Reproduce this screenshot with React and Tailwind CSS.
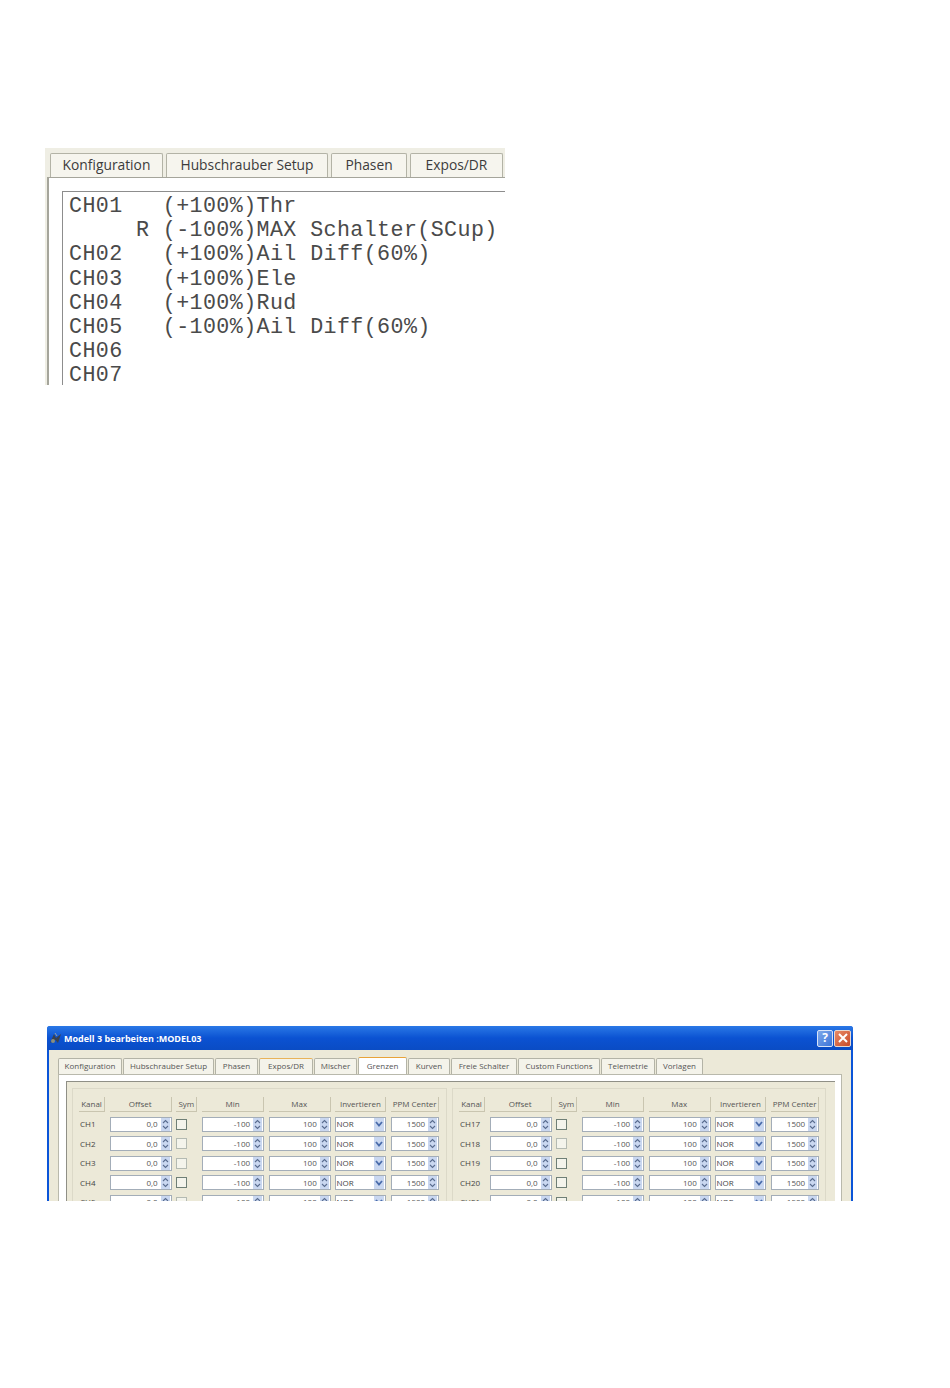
const UI = { fontFamily: '"Open Sans", "Noto Sans", sans-serif' };

function Spin() {
  return (
    <span className="flex h-full w-[9px] shrink-0 items-center justify-center bg-[#c9d7f0]">
      <svg width="7" height="11" viewBox="0 0 7 11" fill="none" stroke="#5a6d90" strokeWidth="1.1">
        <path d="M1 4 L3.5 1.5 L6 4" />
        <path d="M1 7 L3.5 9.5 L6 7" />
      </svg>
    </span>
  );
}

function SpinBox({ value }) {
  return (
    <div className="flex h-[15px] items-center border border-[#a3adb8] bg-white pr-px text-[8px] leading-none text-[#555]">
      <span className="flex-1 pr-[3px] text-right">{value}</span>
      <Spin />
    </div>
  );
}

function Select() {
  return (
    <div className="flex h-[15px] items-center justify-between border border-[#a3adb8] bg-white pr-px text-[8px] leading-none text-[#444]">
      <span>NOR</span>
      <span className="flex h-full w-[10px] items-center justify-center bg-[#c9d7f0]">
        <svg width="8" height="6" viewBox="0 0 8 6" fill="none" stroke="#4a6cab" strokeWidth="1.8">
          <path d="M1 1 L4 4.5 L7 1" />
        </svg>
      </span>
    </div>
  );
}

function Head({ children }) {
  return (
    <div className="flex h-[15px] items-center justify-center border-b border-r border-[#c9c5b0] bg-[#ece9d8] text-[8px] leading-none text-[#555]">
      {children}
    </div>
  );
}

function Group({ start, widthClass, light }) {
  const channels = [0, 1, 2, 3, 4];
  return (
    <div className={`${widthClass} border border-[#dcd9c8] px-[6px] pt-[8px]`}>
      <div className="grid grid-cols-[26px_62px_21px_62px_62px_51px_48px] gap-x-[4.7px] gap-y-[4.6px]">
        <Head>Kanal</Head>
        <Head>Offset</Head>
        <Head>Sym</Head>
        <Head>Min</Head>
        <Head>Max</Head>
        <Head>Invertieren</Head>
        <Head>PPM Center</Head>
        {channels.map((i) => (
          <div key={i} className="contents">
            <div className="flex h-[15px] items-center pl-px text-[8px] leading-none text-[#444]">CH{start + i}</div>
            <SpinBox value="0,0" />
            <div className="flex h-[15px] items-center">
              <span
                className={`h-[11px] w-[11px] border bg-[#f4f4ec] ${
                  light.includes(i) ? "border-[#b4bab2]" : "border-[#6f7f76]"
                }`}
              />
            </div>
            <SpinBox value="-100" />
            <SpinBox value="100" />
            <Select />
            <SpinBox value="1500" />
          </div>
        ))}
      </div>
    </div>
  );
}

const topTabs = [
  ["Konfiguration", "w-[113px]"],
  ["Hubschrauber Setup", "w-[162px]"],
  ["Phasen", "w-[76px]"],
  ["Expos/DR", "w-[93px]"],
];

const lines = [
  "CH01   (+100%)Thr",
  "     R (-100%)MAX Schalter(SCup)",
  "CH02   (+100%)Ail Diff(60%)",
  "CH03   (+100%)Ele",
  "CH04   (+100%)Rud",
  "CH05   (-100%)Ail Diff(60%)",
  "CH06",
  "CH07",
];

const winTabs = [
  ["Konfiguration", "w-[64px]"],
  ["Hubschrauber Setup", "w-[91px]"],
  ["Phasen", "w-[43px]"],
  ["Expos/DR", "w-[54px]", "hot"],
  ["Mischer", "w-[43px]"],
  ["Grenzen", "w-[49px]", "active"],
  ["Kurven", "w-[42px]"],
  ["Freie Schalter", "w-[66px]"],
  ["Custom Functions", "w-[82px]"],
  ["Telemetrie", "w-[54px]"],
  ["Vorlagen", "w-[47px]"],
];

export default function App() {
  return (
    <div className="min-h-[1388px] bg-white" style={UI}>
      <div className="h-[148px]" />
      <section className="ml-[45px] h-[237px] w-[460px] overflow-hidden bg-[#efeee4]">
        <div className="flex gap-[3px] pl-[5px] pt-[5px]">
          {topTabs.map(([t, w]) => (
            <div
              key={t}
              className={`${w} flex h-[24px] items-center justify-center rounded-t-[2px] border border-b-0 border-[#b3b3a6] bg-[#f6f5ee] pb-[2px] text-[13.8px] leading-none text-[#3c3c3c]`}
            >
              {t}
            </div>
          ))}
        </div>
        <div className="ml-[2px] h-full border-l-2 border-t border-[#a5a59b] bg-white pl-[13px] pt-[13px]">
          <div className="h-full border-l border-t border-[#8d8d8d] pl-[6px] pt-[3px]">
            <div className="whitespace-pre font-['Liberation_Mono',monospace] text-[21.67px] leading-[24.2px] tracking-[0.4px] text-[#4a4a4a]">
              {lines.map((l, i) => (
                <div key={i} className="h-[24.2px]">{l}</div>
              ))}
            </div>
          </div>
        </div>
      </section>
      <div className="h-[641px]" />
      <section className="ml-[47px] h-[175px] w-[806px] overflow-hidden rounded-t-[3px] bg-[#0b55d8]">
        <div className="flex h-[24px] items-center bg-gradient-to-b from-[#2a78e6] via-[#0b52d2] to-[#0a4cc4] pl-[2px] pr-[2px]">
          <svg width="13" height="13" viewBox="0 0 13 13" className="mr-[2px] shrink-0">
            <path d="M1 11 L5 2 L7 6 L12 2 L9 11 L6.5 8 Z" fill="#39414f" />
            <circle cx="4" cy="9" r="2" fill="#8a8f80" />
            <path d="M6 1 L8 4" stroke="#9aa0a0" strokeWidth="1" />
          </svg>
          <span className="text-[9px] font-bold leading-none text-white">Modell 3 bearbeiten :MODEL03</span>
          <div className="ml-auto flex gap-px">
            <span className="flex h-[17px] w-[16px] items-center justify-center rounded-[2px] border border-[#d8e4f8] bg-gradient-to-br from-[#7ea8ea] to-[#3d74d8] text-[12px] font-bold leading-none text-white">?</span>
            <span className="flex h-[17px] w-[17px] items-center justify-center rounded-[2px] border border-[#e8d8d0] bg-gradient-to-br from-[#e88a66] to-[#c84a28]">
              <svg width="10" height="10" viewBox="0 0 10 10" stroke="white" strokeWidth="2"><path d="M1 1 L9 9 M9 1 L1 9" /></svg>
            </span>
          </div>
        </div>
        <div className="mx-[2px] h-full bg-[#ece9d8] pl-[9px] pr-[9px] pt-[7px]">
          <div className="flex h-[17px] items-end gap-px">
            {winTabs.map(([t, w, s]) => (
              <div
                key={t}
                className={`${w} flex items-center justify-center rounded-t-[2px] border border-b-0 pb-px text-[8px] leading-none text-[#555] ${
                  s === "active"
                    ? "h-[17px] border-[#b3b3a6] border-t-[#e8a33a] bg-white"
                    : s === "hot"
                      ? "h-[16px] border-[#b3b3a6] border-t-[#e8b35a] bg-[#f4f3ea]"
                      : "h-[16px] border-[#b3b3a6] bg-[#f4f3ea]"
                }`}
              >
                {t}
              </div>
            ))}
          </div>
          <div className="h-full w-[784px] border-l border-r border-t border-[#b9b9ac] bg-white px-[7px] pt-[6px]">
            <div className="flex h-full w-[769px] gap-[5px] border-l border-t border-[#8f8f86] bg-[#ece9d8] pl-[5px] pt-[6px]">
              <Group start={1} widthClass="w-[375px]" light={[1, 2, 4]} />
              <Group start={17} widthClass="w-[374px]" light={[1]} />
            </div>
          </div>
        </div>
      </section>
    </div>
  );
}
